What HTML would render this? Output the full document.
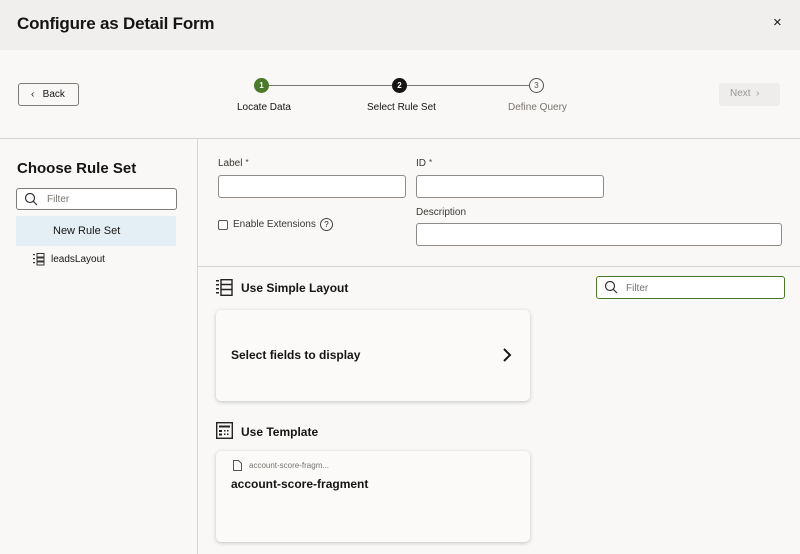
<!DOCTYPE html>
<html><head><style>
*{box-sizing:border-box;margin:0;padding:0}
body{width:800px;height:554px;overflow:hidden;background:#f9f8f6;font-family:"Liberation Sans",sans-serif;color:#161513;position:relative;font-size:11px}
.a{position:absolute}
.hdr{left:0;top:0;width:800px;height:50px;background:#f0efed}
.inp{position:absolute;border:1px solid #8f8c88;border-radius:3px;background:#fff}
.card{position:absolute;background:#fbfaf9;border-radius:5px;box-shadow:0 1px 4px rgba(0,0,0,.22)}
.lbl{position:absolute;font-size:10px;color:#3a3734}
.star{font-size:8px;vertical-align:top;margin-left:3px}
</style></head><body>
<div class="a hdr"></div>
<div class="a" style="left:17px;top:14px;font-size:17px;font-weight:bold;letter-spacing:-0.2px">Configure as Detail Form</div>
<div class="a" style="left:773px;top:14px;font-size:15px">×</div>

<div class="a" style="left:18px;top:83px;width:61px;height:23px;border:1px solid #7f7c78;border-radius:3px;font-size:10px;padding:5px 0 0 12px">‹&nbsp;&nbsp; Back</div>
<div class="a" style="left:719px;top:83px;width:61px;height:23px;background:#eeedeb;border-radius:3px;font-size:10px;color:#9a9794;padding:5px 0 0 11px">Next &nbsp;›</div>

<div class="a" style="left:269px;top:85px;width:123px;height:1px;background:#7a7773"></div>
<div class="a" style="left:406px;top:85px;width:123px;height:1px;background:#7a7773"></div>
<div class="a" style="left:254px;top:78px;width:15px;height:15px;border-radius:50%;background:#4a7a2a;color:#fff;font-size:8px;font-weight:bold;text-align:center;line-height:15px">1</div>
<div class="a" style="left:392px;top:78px;width:15px;height:15px;border-radius:50%;background:#161513;color:#fff;font-size:8px;font-weight:bold;text-align:center;line-height:15px">2</div>
<div class="a" style="left:529px;top:78px;width:15px;height:15px;border-radius:50%;border:1px solid #555;color:#555;font-size:8px;text-align:center;line-height:13px">3</div>
<div class="a" style="left:237px;top:102px;font-size:10px">Locate Data</div>
<div class="a" style="left:367px;top:102px;font-size:10px">Select Rule Set</div>
<div class="a" style="left:508px;top:102px;font-size:10px;color:#77736f">Define Query</div>

<div class="a" style="left:0;top:138px;width:800px;height:1px;background:#d7d5d2"></div>
<div class="a" style="left:197px;top:138px;width:1px;height:416px;background:#d7d5d2"></div>
<div class="a" style="left:198px;top:266px;width:602px;height:1px;background:#d7d5d2"></div>

<div class="a" style="left:17px;top:160px;font-size:15px;font-weight:bold">Choose Rule Set</div>
<div class="inp" style="left:16px;top:188px;width:161px;height:22px;border-color:#7f7c78"></div>
<svg class="a" style="left:24px;top:192px" width="14" height="14" viewBox="0 0 14 14"><circle cx="6" cy="6" r="4.5" fill="none" stroke="#333" stroke-width="1.2"/><path d="M9.3 9.3L13 13" stroke="#333" stroke-width="1.2"/></svg>
<div class="a" style="left:47px;top:194px;font-size:10px;color:#77736f">Filter</div>
<div class="a" style="left:16px;top:216px;width:160px;height:30px;background:#e4eff5"></div>
<div class="a" style="left:53px;top:225px;font-size:11px">New Rule Set</div>
<svg class="a" style="left:33px;top:253px" width="12" height="13" viewBox="0 0 12 13"><g fill="#333"><rect x="0" y="1" width="2" height="1.2"/><rect x="0" y="5" width="2" height="1.2"/><rect x="0" y="9" width="2" height="1.2"/></g><rect x="4" y="0.5" width="7" height="3.5" fill="none" stroke="#333"/><rect x="4" y="5" width="7" height="3" fill="none" stroke="#333"/><rect x="4" y="9" width="7" height="3" fill="none" stroke="#333"/></svg>
<div class="a" style="left:51px;top:254px;font-size:10px">leadsLayout</div>

<div class="lbl" style="left:218px;top:158px">Label<span class="star">*</span></div>
<div class="inp" style="left:218px;top:175px;width:188px;height:23px"></div>
<div class="lbl" style="left:416px;top:158px">ID<span class="star">*</span></div>
<div class="inp" style="left:416px;top:175px;width:188px;height:23px"></div>
<div class="a" style="left:218px;top:220px;width:10px;height:10px;border:1px solid #555;border-radius:2px;background:#fff"></div>
<div class="lbl" style="left:233px;top:219px">Enable Extensions</div>
<div class="a" style="left:320px;top:218px;width:13px;height:13px;border:1px solid #444;border-radius:50%;font-size:8px;text-align:center;line-height:11px">?</div>
<div class="lbl" style="left:416px;top:207px">Description</div>
<div class="inp" style="left:416px;top:223px;width:366px;height:23px"></div>

<svg class="a" style="left:216px;top:279px" width="17" height="17" viewBox="0 0 17 17"><g fill="#222"><rect x="0" y="1" width="3" height="1.5"/><rect x="0" y="5" width="3" height="1.5"/><rect x="0" y="9" width="3" height="1.5"/><rect x="0" y="13" width="3" height="1.5"/></g><rect x="5" y="0.7" width="11" height="15.6" fill="none" stroke="#222" stroke-width="1.4"/><path d="M5 5.5h11M5 10.5h11" stroke="#222" stroke-width="1.4"/></svg>
<div class="a" style="left:241px;top:281px;font-size:12px;font-weight:bold">Use Simple Layout</div>
<div class="inp" style="left:596px;top:276px;width:189px;height:23px;border-color:#4a7a2a"></div>
<svg class="a" style="left:604px;top:280px" width="14" height="14" viewBox="0 0 14 14"><circle cx="6" cy="6" r="4.5" fill="none" stroke="#333" stroke-width="1.2"/><path d="M9.3 9.3L13 13" stroke="#333" stroke-width="1.2"/></svg>
<div class="a" style="left:626px;top:283px;font-size:10px;color:#77736f">Filter</div>

<div class="card" style="left:216px;top:310px;width:314px;height:91px"></div>
<div class="a" style="left:231px;top:348px;font-size:12px;font-weight:bold">Select fields to display</div>
<svg class="a" style="left:501px;top:347px" width="12" height="16" viewBox="0 0 12 16"><path d="M3 2l6 6-6 6" fill="none" stroke="#161513" stroke-width="2"/></svg>

<svg class="a" style="left:216px;top:422px" width="17" height="17" viewBox="0 0 17 17"><rect x="0.7" y="0.7" width="15.6" height="15.6" fill="none" stroke="#222" stroke-width="1.4"/><rect x="3" y="3.5" width="11" height="2" fill="#222"/><g fill="#222"><rect x="3" y="8" width="3" height="2"/><rect x="3" y="11.5" width="3" height="2"/><rect x="8" y="8" width="1.5" height="1.5"/><rect x="11" y="8" width="1.5" height="1.5"/><rect x="8" y="11.5" width="1.5" height="1.5"/><rect x="11" y="11.5" width="1.5" height="1.5"/></g></svg>
<div class="a" style="left:241px;top:425px;font-size:12px;font-weight:bold">Use Template</div>

<div class="card" style="left:216px;top:451px;width:314px;height:91px"></div>
<svg class="a" style="left:233px;top:460px" width="9" height="11" viewBox="0 0 9 11"><path d="M0.5 0.5h5l3 3v7h-8z" fill="none" stroke="#555"/></svg>
<div class="a" style="left:249px;top:461px;font-size:8px;color:#77736f">account-score-fragm...</div>
<div class="a" style="left:231px;top:477px;font-size:12px;font-weight:bold">account-score-fragment</div>
</body></html>
